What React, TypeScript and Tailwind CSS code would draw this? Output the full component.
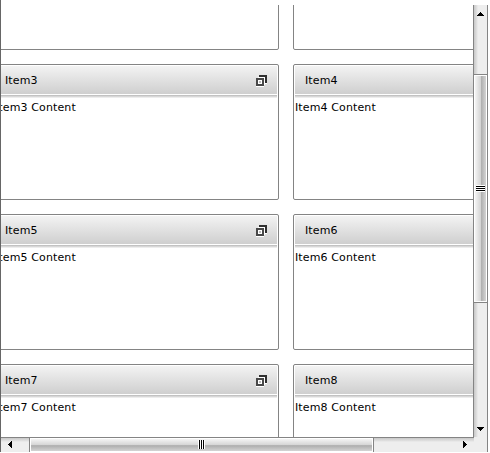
function RestoreIcon() {
  return (
    <svg width="11" height="12" viewBox="0 0 11 12" shapeRendering="crispEdges" className="block shrink-0">
      <path d="M2 2h7v8H0V3h2z" fill="#fff" />
      <path d="M0 11h8v1H0zM9 8h2v1H9z" fill="#fff" />
      <path d="M3 0h8v8H9V2H3z" fill="#303030" />
      <path d="M0 3h8v8H0z" fill="#484848" />
      <path d="M2 5h4v4H2z" fill="#fff" />
      <path d="M3 6h2v2H3z" fill="#bbb" />
    </svg>
  );
}

function Tile({ n, left }: { n: number; left: boolean }) {
  return (
    <section
      className={`flex h-[136px] w-[286px] shrink-0 flex-col rounded-[2px] border border-[#848484] bg-white ${
        left ? "-ml-[8px]" : "ml-[14px]"
      }`}
    >
      <header className="mx-px mt-px flex h-[28px] shrink-0 items-center justify-between bg-linear-to-b from-[#f3f3f3] to-[#cfcfcf] pt-[2px] pr-[10px] pl-[10px]">
        <span>Item{n}</span>
        <RestoreIcon />
      </header>
      <div className="mx-px h-px shrink-0 bg-white" />
      <div className="mx-px h-[3px] shrink-0 bg-linear-to-b from-[#b8b8b8] to-[#f8f8f8]" />
      <p className="mt-[3px] pl-px leading-[14px]">Item{n} Content</p>
    </section>
  );
}

function Arrow({ d, w, h }: { d: string; w: number; h: number }) {
  return (
    <svg width={w} height={h} viewBox={`0 0 ${w} ${h}`} shapeRendering="crispEdges" className="block shrink-0">
      <path d={d} fill="#000" />
    </svg>
  );
}

export default function App() {
  return (
    <div className="flex h-[453px] w-[490px] flex-col overflow-hidden bg-white font-['DejaVu_Sans',Verdana,sans-serif] text-[11px] leading-[14px] tracking-[0.12px] text-black">
      <div className="h-[5px] w-px shrink-0 bg-[#666]" />
      <div className="flex h-[447px] w-[488px] shrink-0 flex-col border-r border-l border-r-[#848484] border-l-[#666]">
        <div className="flex h-[432px] shrink-0">
          <main className="flex w-[472px] shrink-0 flex-col overflow-hidden">
            <div className="-mt-[91px] flex flex-col gap-[14px]">
              {[1, 3, 5, 7].map((n) => (
                <div key={n} className="flex">
                  <Tile n={n} left />
                  <Tile n={n + 1} left={false} />
                </div>
              ))}
            </div>
          </main>
          <aside className="flex w-[14px] shrink-0 flex-col border-l border-[#848484] bg-[linear-gradient(to_right,#c8c8c8_0,#e2e2e2_3px,#eee_4px)]">
            <div className="flex h-[69px] shrink-0 justify-center pt-[7px]">
              <Arrow w={7} h={4} d="M3 0h1v1h1v1h1v1h1v1H0V3h1V2h1V1h1z" />
            </div>
            <div className="flex h-[229px] shrink-0 items-center border-y border-[#848484] bg-white p-px">
              <div className="flex h-full w-full items-center justify-center bg-[linear-gradient(to_right,#f4f4f4_0,#d5d5d5_50%,#adadad_55%,#d4d4d4_100%)]">
                <div className="flex h-[7px] w-[9px] flex-col gap-px bg-white py-px">
                  <div className="h-px bg-black" />
                  <div className="h-px bg-black" />
                  <div className="h-px bg-black" />
                </div>
              </div>
            </div>
            <div className="flex flex-1 items-end justify-center pb-[6px]">
              <Arrow w={7} h={4} d="M0 0h7v1H6v1H5v1H4v1H3V3H2V2H1V1H0z" />
            </div>
          </aside>
        </div>
        <footer className="flex h-[15px] shrink-0 bg-[#eee]">
          <div className="flex w-[473px] shrink-0 border-t border-[#848484] bg-[linear-gradient(to_bottom,#c8c8c8_0,#e2e2e2_3px,#eee_4px)]">
            <div className="flex w-[28px] shrink-0 items-start pt-[3px] pl-[7px]">
              <Arrow w={4} h={7} d="M0 3h1V2h1V1h1V0h1v7H3V6H2V5H1V4H0z" />
            </div>
            <div className="flex w-[345px] shrink-0 border-x border-[#848484] bg-white p-px">
              <div className="flex w-full items-start justify-center bg-[linear-gradient(to_bottom,#f4f4f4_0,#d5d5d5_50%,#adadad_55%,#d4d4d4_100%)] pt-px">
                <div className="flex h-[9px] w-[7px] gap-px bg-white px-px">
                  <div className="w-px bg-black" />
                  <div className="w-px bg-black" />
                  <div className="w-px bg-black" />
                </div>
              </div>
            </div>
            <div className="flex flex-1 items-start justify-end pt-[3px] pr-[7px]">
              <Arrow w={4} h={7} d="M0 0h1v1h1v1h1v1h1v1H3v1H2v1H1v1H0z" />
            </div>
          </div>
        </footer>
      </div>
    </div>
  );
}
